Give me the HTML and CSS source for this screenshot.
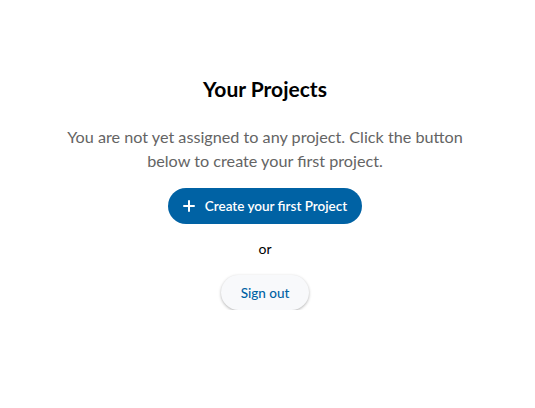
FILE: index.html
```html
<!DOCTYPE html>
<html>
<head>
<meta charset="utf-8">
<link rel="stylesheet" href="styles.css">
</head>
<body>
<main class="page">
  <h1 class="title">Your Projects</h1>
  <p class="lead">You are not yet assigned to any project. Click the button below to create your first project.</p>
  <button class="primary">
    <svg class="plus" width="12" height="12" viewBox="0 0 12 12"><path d="M6 1v10M1 6h10" stroke="#fff" stroke-width="2" stroke-linecap="round"/></svg>
    <span>Create your first Project</span>
  </button>
  <div class="or">or</div>
  <button class="secondary">Sign out</button>
</main>
</body>
</html>
```
FILE: styles.css
```css
* { box-sizing: border-box; }
html, body { margin: 0; padding: 0; background: #fff; }
body { font-family: Lato, "Noto Sans", sans-serif; }
.page {
  display: flex;
  flex-direction: column;
  align-items: center;
  padding: 76px 5px 0 0;
}
.title {
  margin: 0;
  font-size: 21px;
  font-weight: 700;
  color: #000;
  line-height: 26px;
}
.lead {
  margin: 23px 0 0;
  width: 410px;
  text-align: center;
  font-size: 16.2px;
  line-height: 24px;
  color: #646464;
}
.primary {
  margin-top: 15px;
  height: 36px;
  width: 194px;
  border: none;
  border-radius: 18px;
  background: #0062a4;
  color: #fff;
  font-family: inherit;
  font-size: 13.5px;
  font-weight: 600;
  display: flex;
  align-items: center;
  justify-content: center;
  gap: 10px;
  padding: 0;
}
.or {
  margin-top: 16px;
  font-size: 14px;
  line-height: 18px;
  color: #000;
}
.secondary {
  margin-top: 17px;
  height: 35px;
  width: 88px;
  border: none;
  border-radius: 18px;
  background: #f8f9fb;
  box-shadow: 0 1px 3px rgba(0,0,0,0.3);
  color: #0062a4;
  font-family: inherit;
  font-size: 13.5px;
  font-weight: 500;
  padding: 0;
}
```
